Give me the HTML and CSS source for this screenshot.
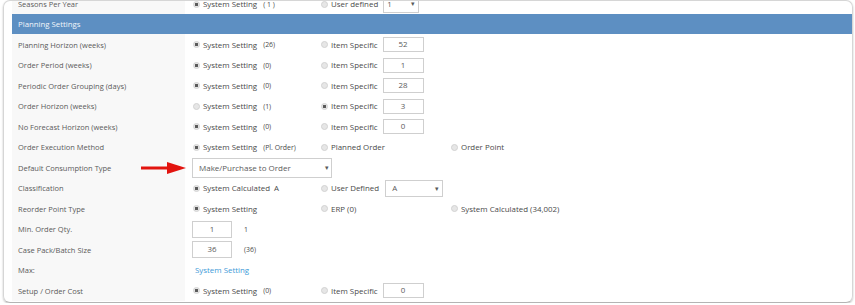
FILE: index.html
```html
<!DOCTYPE html>
<html lang="en">
<head>
  <meta charset="UTF-8">
  <title>Planning Settings</title>
  <link rel="stylesheet" href="styles.css">
</head>
<body>
  <div class="frame">
    <div class="sheet">
      <div class="row">
        <div class="label">Seasons Per Year</div>
        <div class="cell"><span class="radio on"></span>System Setting<span class="note">( 1 )</span></div>
        <div class="cell"><span class="radio"></span>User defined<span class="select season">1<i>&#9662;</i></span></div>
        <div class="cell"></div>
      </div>

      <div class="section">Planning Settings</div>

      <div class="row">
        <div class="label">Planning Horizon (weeks)</div>
        <div class="cell"><span class="radio on"></span>System Setting<span class="note">(26)</span></div>
        <div class="cell"><span class="radio"></span>Item Specific<span class="box">52</span></div>
        <div class="cell"></div>
      </div>
      <div class="row">
        <div class="label">Order Period (weeks)</div>
        <div class="cell"><span class="radio on"></span>System Setting<span class="note">(0)</span></div>
        <div class="cell"><span class="radio"></span>Item Specific<span class="box">1</span></div>
        <div class="cell"></div>
      </div>
      <div class="row">
        <div class="label">Periodic Order Grouping (days)</div>
        <div class="cell"><span class="radio on"></span>System Setting<span class="note">(0)</span></div>
        <div class="cell"><span class="radio"></span>Item Specific<span class="box">28</span></div>
        <div class="cell"></div>
      </div>
      <div class="row">
        <div class="label">Order Horizon (weeks)</div>
        <div class="cell"><span class="radio"></span>System Setting<span class="note">(1)</span></div>
        <div class="cell"><span class="radio on"></span>Item Specific<span class="box">3</span></div>
        <div class="cell"></div>
      </div>
      <div class="row">
        <div class="label">No Forecast Horizon (weeks)</div>
        <div class="cell"><span class="radio on"></span>System Setting<span class="note">(0)</span></div>
        <div class="cell"><span class="radio"></span>Item Specific<span class="box">0</span></div>
        <div class="cell"></div>
      </div>
      <div class="row">
        <div class="label">Order Execution Method</div>
        <div class="cell"><span class="radio on"></span>System Setting<span class="note">(Pl. Order)</span></div>
        <div class="cell"><span class="radio"></span>Planned Order</div>
        <div class="cell"><span class="radio"></span>Order Point</div>
      </div>
      <div class="row">
        <div class="label">Default Consumption Type</div>
        <div class="cell wide"><span class="select consumption">Make/Purchase to Order<i>&#9662;</i></span></div>
        <div class="cell"></div>
      </div>
      <div class="row">
        <div class="label">Classification</div>
        <div class="cell"><span class="radio on"></span>System Calculated<span class="note dark">A</span></div>
        <div class="cell"><span class="radio"></span>User Defined<span class="select abc">A<i>&#9662;</i></span></div>
        <div class="cell"></div>
      </div>
      <div class="row">
        <div class="label">Reorder Point Type</div>
        <div class="cell"><span class="radio on"></span>System Setting</div>
        <div class="cell"><span class="radio"></span>ERP (0)</div>
        <div class="cell"><span class="radio"></span>System Calculated (34,002)</div>
      </div>
      <div class="row">
        <div class="label">Min. Order Qty.</div>
        <div class="cell"><span class="box qty">1</span><span class="note far">1</span></div>
        <div class="cell"></div>
        <div class="cell"></div>
      </div>
      <div class="row">
        <div class="label">Case Pack/Batch Size</div>
        <div class="cell"><span class="box qty">36</span><span class="note far">(36)</span></div>
        <div class="cell"></div>
        <div class="cell"></div>
      </div>
      <div class="row">
        <div class="label">Max:</div>
        <div class="cell"><a class="link" href="#">System Setting</a></div>
        <div class="cell"></div>
        <div class="cell"></div>
      </div>
      <div class="row">
        <div class="label">Setup / Order Cost</div>
        <div class="cell"><span class="radio on"></span>System Setting<span class="note">(0)</span></div>
        <div class="cell"><span class="radio"></span>Item Specific<span class="box">0</span></div>
        <div class="cell"></div>
      </div>
    </div>

    <!-- annotation arrow drawn over the page -->
    <svg class="arrow" width="46" height="12" viewBox="0 0 46 12">
      <rect x="0" y="4.5" width="28" height="3" fill="#e2140f"/>
      <polygon points="26,0 45,6 26,12" fill="#e2140f"/>
    </svg>
  </div>
</body>
</html>
```

FILE: styles.css
```css
:root {
  --header-blue: #5d8fc2;
  --label-bg: #f8f8f8;
  --text: #4a4a4a;
  --muted: #5a5a5a;
  --border: #cfcfcf;
  --link: #3d9ad8;
}

body {
  margin: 0;
  background: #ffffff;
  font-family: "Open Sans", "Noto Sans", sans-serif;
  font-size: 7.5px;
  color: var(--text);
}

.frame {
  position: relative;
  box-sizing: border-box;
  height: 303px;
  margin: 0 2px 0 3px;
  border: 1px solid #d6d6d6;
  border-bottom-color: #b4b4b4;
  border-radius: 7px;
  box-shadow: 0 1px 2px rgba(0, 0, 0, 0.25);
  overflow: hidden;
}

.sheet {
  margin-top: -7.25px;
  padding-left: 8px;
}

.section {
  height: 20px;
  line-height: 20px;
  padding-left: 6px;
  background: var(--header-blue);
  color: #f2f6fb;
  font-size: 7.8px;
}

.row {
  display: grid;
  grid-template-columns: 173px 128px 130px 1fr;
  height: 20.5px;
}

.label {
  display: flex;
  align-items: center;
  padding-left: 6px;
  background: var(--label-bg);
  color: var(--muted);
}

.cell {
  display: flex;
  align-items: center;
  padding-left: 8px;
  white-space: nowrap;
  font-size: 7.9px;
}

.cell.wide {
  grid-column: span 2;
  padding-left: 7px;
}

.radio {
  width: 7px;
  height: 7px;
  margin-right: 3px;
  border-radius: 50%;
  box-sizing: border-box;
  border: 1px solid #d2d2d2;
  background: #e6e6e6;
  flex: none;
}

.radio.on {
  background: radial-gradient(circle, #5a5a5a 0 1.4px, #e6e6e6 1.9px);
}

.note {
  margin-left: 6px;
  font-size: 6.9px;
}

.note.dark {
  font-size: 7.9px;
  margin-left: 4px;
}

.note.far {
  margin-left: 12px;
}

.box {
  box-sizing: border-box;
  width: 41px;
  height: 15px;
  margin-left: 5px;
  border: 1px solid var(--border);
  background: #fff;
  color: var(--muted);
  line-height: 13px;
  text-align: center;
}

.box.qty {
  width: 40px;
  height: 17px;
  margin-left: -1px;
  line-height: 15px;
}

.select {
  position: relative;
  box-sizing: border-box;
  height: 17px;
  margin-left: 5px;
  padding-left: 6px;
  border: 1px solid var(--border);
  background: #fff;
  color: var(--muted);
  line-height: 15px;
}

.select i {
  position: absolute;
  right: 3px;
  top: 0;
  font-style: normal;
  font-size: 7px;
}

.select.season {
  width: 36px;
  height: 18px;
  padding-left: 3px;
  line-height: 16px;
}

.select.abc {
  width: 64px;
  margin-left: 6px;
}

.select.consumption {
  width: 140px;
  height: 20px;
  margin-left: 0;
  line-height: 18px;
  font-size: 8px;
}

.select.consumption i {
  right: 2px;
}

.link {
  margin-left: 2px;
  color: var(--link);
  text-decoration: none;
}

.arrow {
  position: absolute;
  left: 137px;
  top: 161px;
}
```
